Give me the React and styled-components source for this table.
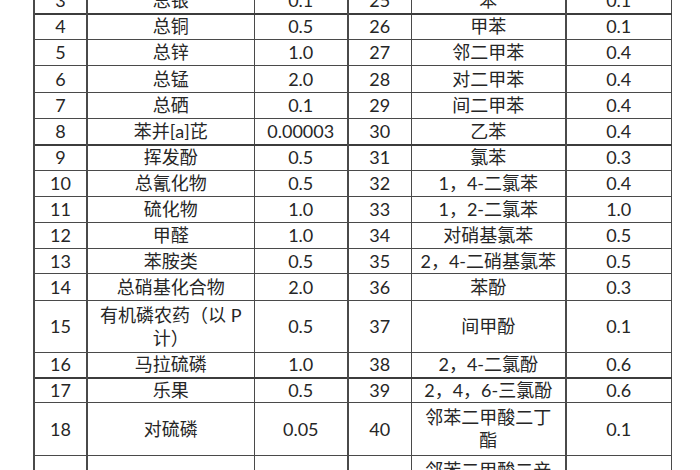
import React from 'react'
import styled, { createGlobalStyle } from 'styled-components'

const GlobalStyle = createGlobalStyle`
    html, body {
        margin: 0;
        padding: 0;
        background: #ffffff;
        overflow: hidden;
    }
`

// [编号, 名称, 限值] left half, then right half
const ROWS = [
    { h: 26, left: [3, '总银', '0.1'], right: [25, '苯', '0.1'] },
    { h: 26, left: [4, '总铜', '0.5'], right: [26, '甲苯', '0.1'], thick: true },
    { h: 26, left: [5, '总锌', '1.0'], right: [27, '邻二甲苯', '0.4'] },
    { h: 27, left: [6, '总锰', '2.0'], right: [28, '对二甲苯', '0.4'] },
    { h: 26, left: [7, '总硒', '0.1'], right: [29, '间二甲苯', '0.4'] },
    { h: 26, left: [8, '苯并[a]芘', '0.00003'], right: [30, '乙苯', '0.4'] },
    { h: 26, left: [9, '挥发酚', '0.5'], right: [31, '氯苯', '0.3'], thick: true },
    { h: 26, left: [10, '总氰化物', '0.5'], right: [32, '1，4-二氯苯', '0.4'] },
    { h: 26, left: [11, '硫化物', '1.0'], right: [33, '1，2-二氯苯', '1.0'] },
    { h: 26, left: [12, '甲醛', '1.0'], right: [34, '对硝基氯苯', '0.5'] },
    { h: 25, left: [13, '苯胺类', '0.5'], right: [35, '2，4-二硝基氯苯', '0.5'] },
    { h: 27, left: [14, '总硝基化合物', '2.0'], right: [36, '苯酚', '0.3'] },
    { h: 52, left: [15, ['有机磷农药（以 P', '计）'], '0.5'], right: [37, '间甲酚', '0.1'] },
    { h: 25, left: [16, '马拉硫磷', '1.0'], right: [38, '2，4-二氯酚', '0.6'] },
    { h: 25, left: [17, '乐果', '0.5'], right: [39, '2，4，6-三氯酚', '0.6'], thick: true },
    { h: 53, left: [18, '对硫磷', '0.05'], right: [40, ['邻苯二甲酸二丁', '酯'], '0.1'] },
    { h: 53, left: [19, '甲基对硫磷', '0.2'], right: [41, ['邻苯二甲酸二辛', '酯'], '0.1'] },
]

const COLS = [53, 167, 94, 63, 155, 105]

const Page = styled.div`
    width: 700px;
    height: 470px;
    overflow: hidden;
    padding-left: 33px;
    box-sizing: border-box;
`

const Table = styled.table`
    margin-top: -13px;
    width: 638px;
    table-layout: fixed;
    border-collapse: collapse;
    font-family: Lato, "Noto Sans CJK SC", sans-serif;
    font-size: 18px;
    color: #262626;
`

const Row = styled.tr`
    height: ${p => p.$h}px;
    & > td {
        border-top: ${p => (p.$thick ? 2 : 1)}px solid #3c3c3c;
    }
`

const Cell = styled.td`
    border: 1px solid #4a4a4a;
    border-left-width: ${p => (p.$strong ? 2 : 1)}px;
    padding: 0 4px;
    text-align: center;
    vertical-align: middle;
    line-height: 23px;
    white-space: nowrap;
    overflow: hidden;
`

const Name = ({ value }) =>
    Array.isArray(value)
        ? value.map((line, i) => <div key={i}>{line}</div>)
        : value

const App = () => (
    <>
        <GlobalStyle />
        <Page>
            <Table>
                <colgroup>
                    {COLS.map((w, i) => <col key={i} style={{ width: w }} />)}
                </colgroup>
                <tbody>
                    {ROWS.map(r => (
                        <Row key={r.left[0]} $h={r.h} $thick={r.thick}>
                            <Cell $strong>{r.left[0]}</Cell>
                            <Cell $strong><Name value={r.left[1]} /></Cell>
                            <Cell>{r.left[2]}</Cell>
                            <Cell $strong>{r.right[0]}</Cell>
                            <Cell><Name value={r.right[1]} /></Cell>
                            <Cell $strong>{r.right[2]}</Cell>
                        </Row>
                    ))}
                </tbody>
            </Table>
        </Page>
    </>
)

export default App
